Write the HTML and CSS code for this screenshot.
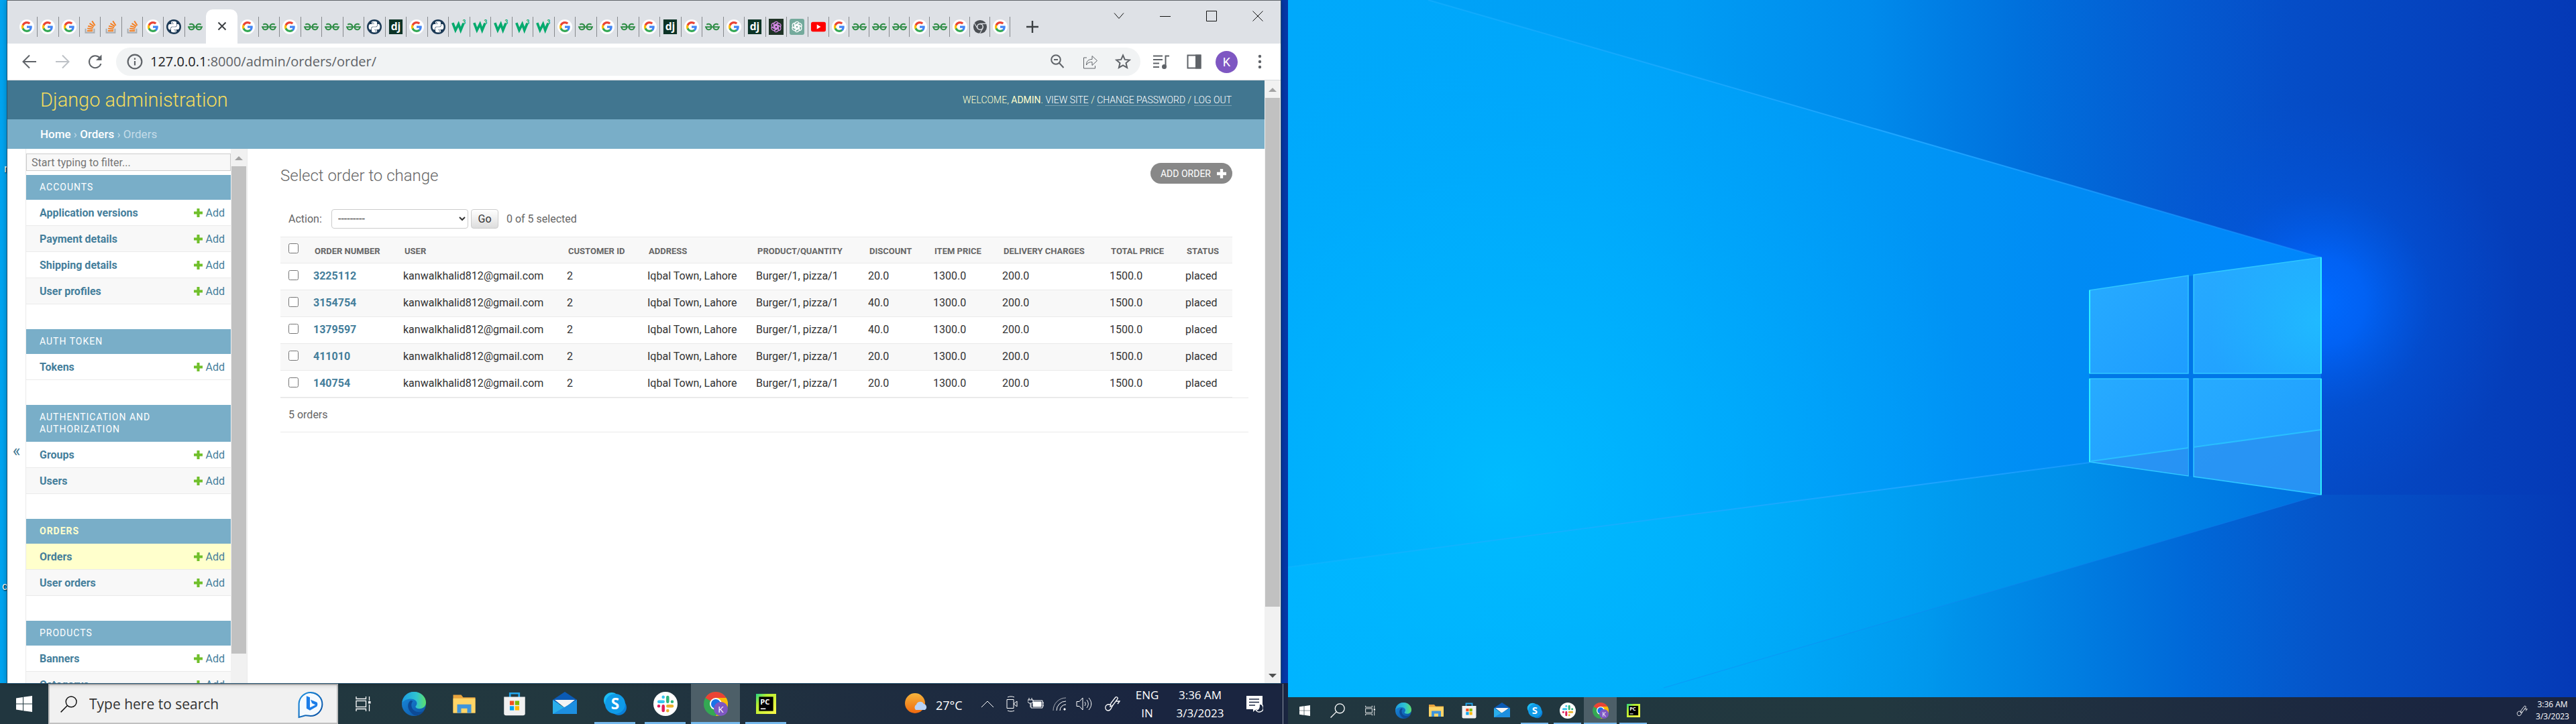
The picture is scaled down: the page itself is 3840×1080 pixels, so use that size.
FILE: index.html
```html
<!DOCTYPE html>
<html lang="en">
<head>
<meta charset="utf-8">
<title>Select order to change | Django site admin</title>
<link rel="stylesheet" href="styles.css">
</head>
<body>
<svg class="defs" aria-hidden="true">
  <defs>
    <linearGradient id="edge-a" x1="0" y1="0" x2="1" y2="0"><stop offset="0" stop-color="#1b9de2"/><stop offset=".6" stop-color="#2fc3d0"/><stop offset="1" stop-color="#5ddf6a"/></linearGradient>
    <linearGradient id="edge-b" x1="0" y1="0" x2="1" y2="1"><stop offset="0" stop-color="#1a8ee0"/><stop offset="1" stop-color="#0b4fa0"/></linearGradient>
    <linearGradient id="sun" x1="0" y1="0" x2="0" y2="1"><stop offset="0" stop-color="#f6b53c"/><stop offset="1" stop-color="#f0690e"/></linearGradient>
    <linearGradient id="pc" x1="0" y1="0" x2="1" y2="1"><stop offset="0" stop-color="#21d789"/><stop offset=".3" stop-color="#b6ee30"/><stop offset="1" stop-color="#fcf84a"/></linearGradient>
  </defs>
  <symbol id="i-google" viewBox="0 0 24 24"><circle cx="12" cy="12" r="12" fill="#fff"/><g transform="translate(2.4 2.4) scale(.8)"><path fill="#4285f4" d="M22.56 12.25c0-.78-.07-1.53-.2-2.25H12v4.26h5.92c-.26 1.37-1.04 2.53-2.21 3.31v2.77h3.57c2.08-1.92 3.28-4.74 3.28-8.09z"/><path fill="#34a853" d="M12 23c2.97 0 5.46-.98 7.28-2.66l-3.57-2.77c-.98.66-2.23 1.06-3.71 1.06-2.86 0-5.29-1.93-6.16-4.53H2.18v2.84C3.99 20.53 7.7 23 12 23z"/><path fill="#fbbc05" d="M5.84 14.09c-.22-.66-.35-1.36-.35-2.09s.13-1.43.35-2.09V7.07H2.18C1.43 8.55 1 10.22 1 12s.43 3.45 1.18 4.93l3.66-2.84z"/><path fill="#ea4335" d="M12 5.38c1.62 0 3.06.56 4.21 1.64l3.15-3.15C17.45 2.09 14.97 1 12 1 7.7 1 3.99 3.47 2.18 7.07l3.66 2.84c.87-2.6 3.3-4.53 6.16-4.53z"/></g></symbol>
  <symbol id="i-stack" viewBox="0 0 24 24"><path d="M5 15v6.500h14V15" fill="none" stroke="#a9adb1" stroke-width="2.200"/><path d="M7.500 18.500h9M7.800 14.800l8.900.9M9 10.600l8.500 2.600M11.500 6.400l7.200 5M15.500 2.600l4.800 7.200" stroke="#f48024" stroke-width="2.200"/></symbol>
  <symbol id="i-python" viewBox="0 0 24 24"><circle cx="12" cy="12" r="12" fill="#1c3a56"/><path transform="translate(2.900 2.900) scale(.76)" fill="#fff" d="M14.250.18l.9.2.73.26.59.3.45.32.34.34.25.34.16.33.1.3.04.26.02.2-.01.13V8.500l-.05.63-.13.55-.21.46-.26.38-.3.31-.33.25-.35.19-.35.14-.33.1-.3.07-.26.04-.21.02H8.770l-.69.05-.59.14-.5.22-.41.27-.33.32-.27.35-.2.36-.15.37-.1.35-.07.32-.04.27-.02.21v3.060H3.170l-.21-.03-.28-.07-.32-.12-.35-.18-.36-.26-.36-.36-.35-.46-.32-.59-.28-.73-.21-.88-.14-1.050-.05-1.230.06-1.220.16-1.040.24-.87.32-.71.36-.57.4-.44.42-.33.42-.24.4-.16.36-.1.32-.05.24-.01h.16l.06.01h8.160v-.83H6.180l-.01-2.750-.02-.37.05-.34.11-.31.17-.28.25-.26.31-.23.38-.2.44-.18.51-.15.58-.12.64-.1.71-.06.77-.04.84-.02 1.270.05zm-6.300 1.980l-.23.33-.08.41.08.41.23.34.33.22.41.09.41-.09.33-.22.23-.34.08-.41-.08-.41-.23-.33-.33-.22-.41-.09-.41.09zm13.090 3.950l.28.06.32.12.35.18.36.27.36.35.35.47.32.59.28.73.21.88.14 1.040.05 1.230-.06 1.230-.16 1.040-.24.86-.32.71-.36.57-.4.45-.42.33-.42.24-.4.16-.36.09-.32.05-.24.02-.16-.01h-8.220v.82h5.840l.01 2.760.02.36-.05.34-.11.31-.17.29-.25.25-.31.24-.38.2-.44.17-.51.15-.58.13-.64.09-.71.07-.77.04-.84.01-1.270-.04-1.070-.14-.9-.2-.73-.25-.59-.3-.45-.33-.34-.34-.25-.34-.16-.33-.1-.3-.04-.25-.02-.2.01-.13v-5.340l.05-.64.13-.54.21-.46.26-.38.3-.32.33-.24.35-.2.35-.14.33-.1.3-.06.26-.04.21-.02.13-.01h5.840l.69-.05.59-.14.5-.21.41-.28.33-.32.27-.35.2-.36.15-.36.1-.35.07-.32.04-.28.02-.21V6.070h2.090l.14.01zm-6.470 14.250l-.23.33-.08.41.08.41.23.33.33.23.41.08.41-.08.33-.23.23-.33.08-.41-.08-.41-.23-.33-.33-.23-.41-.08-.41.08z"/></symbol>
  <symbol id="i-geeks" viewBox="0 0 24 24"><g fill="none" stroke="#2f8d46" stroke-width="2.200"><path d="M2.500 8.500C5 6.500 10 7 10.300 12c0 6-8.300 6-8.300 1M0 12.300h24M21.500 8.500C19 6.500 14 7 13.700 12c0 6 8.300 6 8.300 1"/></g></symbol>
  <symbol id="i-django" viewBox="0 0 24 24"><rect x="1" width="22" height="24" fill="#0c3326"/><text x="12" y="17" font-family="Open Sans, sans-serif" font-size="17" font-weight="700" fill="#fff" text-anchor="middle">dj</text></symbol>
  <symbol id="i-w3" viewBox="0 0 24 24"><path d="M2 5.500l4.500 12 5-10 3.500 10 4.500-11" fill="none" stroke="#04aa6d" stroke-width="4"/><text x="18" y="8" font-family="Roboto, sans-serif" font-size="9" font-weight="700" fill="#04aa6d">3</text></symbol>
  <symbol id="i-knot" viewBox="0 0 24 24"><g fill="none" stroke="currentColor" stroke-width="1.300"><path id="knot" d="M8.500 14V7.500a3.700 3.700 0 0 1 6.800-2L10 8.600v6.200"/><use href="#knot" transform="rotate(60 12 12)"/><use href="#knot" transform="rotate(120 12 12)"/><use href="#knot" transform="rotate(180 12 12)"/><use href="#knot" transform="rotate(240 12 12)"/><use href="#knot" transform="rotate(300 12 12)"/></g></symbol>
  <symbol id="i-youtube" viewBox="0 0 24 24"><rect y="4" width="24" height="16" rx="3" fill="#f00"/><path d="M9.500 8.200v7.600l6.300-3.800z" fill="#fff"/></symbol>
  <symbol id="i-chrome-gray" viewBox="0 0 24 24"><circle cx="12" cy="12" r="11" fill="#4b4f54"/><path d="M12 7h10M7.700 14.500l-5-8.600M16.300 14.500l-5 8.600" stroke="#dee1e6" stroke-width="1.200"/><circle cx="12" cy="12" r="5.500" fill="#dee1e6"/><circle cx="12" cy="12" r="3.800" fill="#4b4f54"/></symbol>
  <symbol id="i-plus" viewBox="0 0 13 13"><path d="M4.500 0h4v4.500H13v4H8.500V13h-4V8.500H0v-4h4.500z" fill="currentColor"/></symbol>
  <symbol id="i-start" viewBox="0 0 24 24"><path fill="#fff" d="M0 3.400L10 2v9.500H0zM11 1.800L24 0v11.500H11zM0 12.500h10V22L0 20.600zM11 12.500h13V24l-13-1.800z"/></symbol>
  <symbol id="i-search" viewBox="0 0 24 24"><g fill="none" stroke="currentColor" stroke-width="1.400"><circle cx="15.500" cy="8.500" r="7.600"/><path d="M10 14L.6 23.400"/></g></symbol>
  <symbol id="i-taskview" viewBox="0 0 24 24"><g fill="none" stroke="#fff" stroke-width="1.300"><rect x="1" y="7.500" width="14.500" height="9"/><path d="M1 1v3.500h14.500V1M1 23v-3.500h14.500V23M20.500 1v6M20.500 13v10"/></g><rect x="19" y="8" width="3.500" height="3.500" fill="#fff"/></symbol>
  <symbol id="i-edge" viewBox="0 0 24 24"><circle cx="12" cy="12" r="12" fill="url(#edge-b)"/><path d="M.2 11C1 4.300 6 0 12 0c7 0 12 5 12 10.500 0 4-3 6.300-6.400 6.300-2.600 0-4-1-4-2 0-.8 1.400-1.300 1.400-3.300 0-2.500-2.600-4.500-6-4.500-4 0-7.500 1.800-8.800 4z" fill="url(#edge-a)"/><path d="M9 8.500c-4 2.500-4.500 9.500 3 14.500 4 1.500 8-1 10-4-6 3-12.500 0-12.500-6 0-1.700.8-3 1.500-3.700z" fill="#0d4a96"/></symbol>
  <symbol id="i-folder" viewBox="0 0 24 24"><path d="M1 3h8l2 2.500h12V21H1z" fill="#e8a33d"/><path d="M1 6.500h22V21H1z" fill="#ffd567"/><path d="M5 21v-8.500h14V21h-4v-4.500H9V21z" fill="#3f95dc"/></symbol>
  <symbol id="i-store" viewBox="0 0 24 24"><path d="M7.500 6V1.500h9V6" fill="none" stroke="#21a6ee" stroke-width="1.800"/><path d="M1.500 5h21v16.500a2 2 0 0 1-2 2h-17a2 2 0 0 1-2-2z" fill="#f1f1f1"/><path fill="#f25022" d="M7.300 9h4.200v4.200H7.300z"/><path fill="#7fba00" d="M12.500 9h4.200v4.200h-4.200z"/><path fill="#00a4ef" d="M7.300 14.200h4.200v4.200H7.300z"/><path fill="#ffb900" d="M12.500 14.200h4.200v4.200h-4.200z"/></symbol>
  <symbol id="i-mail" viewBox="0 0 24 24"><path d="M0 8L12 0l12 8v4H0z" fill="#0a5ab5"/><path d="M2 8h20l-10 8z" fill="#f4f4f4"/><path d="M0 8l12 8 12-8v14H0z" fill="#2aaeea"/><path d="M24 8L0 22h24z" fill="#1d8fe0"/><path d="M2.500 8h19l-9.500 7z" fill="#f4f4f4"/></symbol>
  <symbol id="i-skype" viewBox="0 0 24 24"><circle cx="8.500" cy="8.500" r="7.800" fill="#1dbdf5"/><circle cx="15.500" cy="15.500" r="7.800" fill="#0a7fd8"/><circle cx="12" cy="12" r="10" fill="#0f9be8"/><text x="12" y="17" font-family="Open Sans, sans-serif" font-size="15" font-weight="700" fill="#fff" text-anchor="middle">S</text></symbol>
  <symbol id="i-slack" viewBox="0 0 24 24"><circle cx="12" cy="12" r="12" fill="#fff"/><g fill="none" stroke-width="3" stroke-linecap="round"><path d="M9.800 5.200v.1M5.500 9.800h4.300" stroke="#36c5f0"/><path d="M14.200 5.300v4.500M18.600 9.800h.1" stroke="#2eb67d"/><path d="M14.200 14.200h4.500M14.200 18.700v.1" stroke="#ecb22e"/><path d="M9.800 14.200v4.500M5.300 14.200h.1" stroke="#e01e5a"/></g></symbol>
  <symbol id="i-chrome" viewBox="0 0 24 24"><circle cx="12" cy="12" r="12" fill="#34a853"/><path d="M12 12L1.600 6A12 12 0 0 1 22.400 6z" fill="#ea4335"/><path d="M12 6h10.400A12 12 0 0 1 12 24l5.200-9z" fill="#fbbc05"/><circle cx="12" cy="12" r="6" fill="#fff"/><circle cx="12" cy="12" r="4.700" fill="#1a73e8"/><circle cx="17" cy="17" r="7" fill="#7e57c2"/><text x="17" y="20.500" font-family="Open Sans, sans-serif" font-size="9" fill="#fff" text-anchor="middle">K</text></symbol>
  <symbol id="i-pycharm" viewBox="0 0 24 24"><path fill="url(#pc)" d="M0 0h24v24H0z"/><path d="M3.500 3.500h17v17h-17z"/><text x="5" y="12.500" font-family="Open Sans, sans-serif" font-size="9" font-weight="700" fill="#fff">PC</text><path d="M5.500 17.200h6v1.300h-6z" fill="#fff"/></symbol>
  <symbol id="i-pen" viewBox="0 0 24 24"><g fill="none" stroke="#fff" stroke-width="1.300"><path d="M9 16l1-5 7-9c1-1 4 0 3 2.500L13 14zM17 8h6l-3 4M9 13c-9-2-9 9-3 9 4 0 4-4 7-8"/></g></symbol>
</svg>

<main class="screens">
<section class="monitor" aria-label="Display 1">
  <div class="desktop">
    <span class="label label-a" aria-hidden="true">r</span>
    <span class="label label-b" aria-hidden="true">c</span>
    <div class="browser">
      <div class="tabstrip">
        <div class="tabs tabs-a">
          <button class="tab" aria-label="Google"><svg><use href="#i-google"/></svg></button>
          <button class="tab" aria-label="Google"><svg><use href="#i-google"/></svg></button>
          <button class="tab" aria-label="Google"><svg><use href="#i-google"/></svg></button>
          <button class="tab" aria-label="Stack Overflow"><svg><use href="#i-stack"/></svg></button>
          <button class="tab" aria-label="Stack Overflow"><svg><use href="#i-stack"/></svg></button>
          <button class="tab" aria-label="Stack Overflow"><svg><use href="#i-stack"/></svg></button>
          <button class="tab" aria-label="Google"><svg><use href="#i-google"/></svg></button>
          <button class="tab" aria-label="Python"><svg><use href="#i-python"/></svg></button>
          <button class="tab last" aria-label="GeeksforGeeks"><svg><use href="#i-geeks"/></svg></button>
        </div>
        <button class="tab-active" aria-label="Close tab"><svg viewBox="0 0 14 14"><path d="M1.500 1.500l11 11M12.500 1.500l-11 11" stroke="#3c4043" stroke-width="2"/></svg></button>
        <div class="tabs tabs-b">
          <button class="tab" aria-label="Google"><svg><use href="#i-google"/></svg></button>
          <button class="tab" aria-label="GeeksforGeeks"><svg><use href="#i-geeks"/></svg></button>
          <button class="tab" aria-label="Google"><svg><use href="#i-google"/></svg></button>
          <button class="tab" aria-label="GeeksforGeeks"><svg><use href="#i-geeks"/></svg></button>
          <button class="tab" aria-label="GeeksforGeeks"><svg><use href="#i-geeks"/></svg></button>
          <button class="tab" aria-label="GeeksforGeeks"><svg><use href="#i-geeks"/></svg></button>
          <button class="tab" aria-label="Python"><svg><use href="#i-python"/></svg></button>
          <button class="tab" aria-label="Django"><svg><use href="#i-django"/></svg></button>
          <button class="tab" aria-label="Google"><svg><use href="#i-google"/></svg></button>
          <button class="tab" aria-label="Python"><svg><use href="#i-python"/></svg></button>
          <button class="tab" aria-label="W3Schools"><svg><use href="#i-w3"/></svg></button>
          <button class="tab" aria-label="W3Schools"><svg><use href="#i-w3"/></svg></button>
          <button class="tab" aria-label="W3Schools"><svg><use href="#i-w3"/></svg></button>
          <button class="tab" aria-label="W3Schools"><svg><use href="#i-w3"/></svg></button>
          <button class="tab" aria-label="W3Schools"><svg><use href="#i-w3"/></svg></button>
          <button class="tab" aria-label="Google"><svg><use href="#i-google"/></svg></button>
          <button class="tab" aria-label="GeeksforGeeks"><svg><use href="#i-geeks"/></svg></button>
          <button class="tab" aria-label="Google"><svg><use href="#i-google"/></svg></button>
          <button class="tab" aria-label="GeeksforGeeks"><svg><use href="#i-geeks"/></svg></button>
          <button class="tab" aria-label="Google"><svg><use href="#i-google"/></svg></button>
          <button class="tab" aria-label="Django"><svg><use href="#i-django"/></svg></button>
          <button class="tab" aria-label="Google"><svg><use href="#i-google"/></svg></button>
          <button class="tab" aria-label="GeeksforGeeks"><svg><use href="#i-geeks"/></svg></button>
          <button class="tab" aria-label="Google"><svg><use href="#i-google"/></svg></button>
          <button class="tab" aria-label="Django"><svg><use href="#i-django"/></svg></button>
          <button class="tab" aria-label="OpenAI"><svg class="knot-dark"><use href="#i-knot"/></svg></button>
          <button class="tab" aria-label="ChatGPT"><svg class="knot-green"><use href="#i-knot"/></svg></button>
          <button class="tab" aria-label="YouTube"><svg><use href="#i-youtube"/></svg></button>
        </div>
        <div class="tabs tabs-c">
          <button class="tab" aria-label="Google"><svg><use href="#i-google"/></svg></button>
          <button class="tab" aria-label="GeeksforGeeks"><svg><use href="#i-geeks"/></svg></button>
          <button class="tab" aria-label="GeeksforGeeks"><svg><use href="#i-geeks"/></svg></button>
          <button class="tab" aria-label="GeeksforGeeks"><svg><use href="#i-geeks"/></svg></button>
          <button class="tab" aria-label="Google"><svg><use href="#i-google"/></svg></button>
          <button class="tab" aria-label="GeeksforGeeks"><svg><use href="#i-geeks"/></svg></button>
          <button class="tab" aria-label="Google"><svg><use href="#i-google"/></svg></button>
          <button class="tab" aria-label="Chrome"><svg><use href="#i-chrome-gray"/></svg></button>
          <button class="tab" aria-label="Google"><svg><use href="#i-google"/></svg></button>
        </div>
        <button class="new-tab" aria-label="New tab"><svg viewBox="0 0 18 18"><path d="M9 0v18M0 9h18" stroke="#3c4043" stroke-width="2.400"/></svg></button>
        <div class="win-controls">
          <button aria-label="Search tabs"><svg viewBox="0 0 16 16"><path d="M1 3.500l7 8 7-8"/></svg></button>
          <button aria-label="Minimize"><svg viewBox="0 0 16 16"><path d="M0 8.500h16"/></svg></button>
          <button aria-label="Maximize"><svg viewBox="0 0 16 16"><path d="M.5.500h15v15h-15z"/></svg></button>
          <button aria-label="Close"><svg viewBox="0 0 16 16"><path d="M.5.500l15 15M15.500.500l-15 15"/></svg></button>
        </div>
      </div>

      <div class="toolbar">
        <button class="tool" aria-label="Back"><svg viewBox="0 0 24 24"><path d="M22 12H3.500M12 2.500L2.500 12l9.500 9.500"/></svg></button>
        <button class="tool off" aria-label="Forward"><svg viewBox="0 0 24 24"><path d="M2 12h18.500M12 2.500l9.500 9.500-9.500 9.500"/></svg></button>
        <button class="tool" aria-label="Reload"><svg viewBox="0 0 24 24"><path d="M18.500 6A9 9 0 1 0 20.500 15"/><path d="M21.500 1.500v8.500H13z" class="solid bare"/></svg></button>
        <div class="omnibox">
          <svg class="info" viewBox="0 0 22 22"><circle cx="11" cy="11" r="9.500"/><path d="M11 10v6M11 6v2.200"/></svg>
          <div class="url" role="textbox" aria-label="Address"><span class="host">127.0.0.1</span>:8000/admin/orders/order/</div>
          <button class="tool" aria-label="Zoom"><svg viewBox="0 0 24 24"><circle cx="10" cy="9" r="6.800"/><path d="M15 14l6.500 7M7 9h6"/></svg></button>
          <button class="tool" aria-label="Share"><svg class="thin" viewBox="0 0 24 24"><path d="M7 6H2.500v16h17v-4M6.500 17c0-6 3-8.500 8.500-8.500V3.500l7.500 7-7.500 7v-5c-4 0-6.500 1-8.500 4.500z"/></svg></button>
          <button class="tool" aria-label="Bookmark"><svg viewBox="0 0 24 24"><path d="M12 2.500l2.800 6.400 7 .6-5.300 4.600 1.600 6.800-6.100-3.600-6.100 3.600 1.600-6.800-5.300-4.600 7-.6z"/></svg></button>
        </div>
        <button class="tool" aria-label="Media"><svg viewBox="0 0 24 24"><path d="M0 3.500h14M0 9h14M0 14.500h9M0 20h9M18.500 19V3.500H24"/><circle cx="16.500" cy="19.500" r="2.500" class="solid"/></svg></button>
        <button class="tool" aria-label="Side panel"><svg viewBox="0 0 24 24"><path d="M2.500 2.500h19v19h-19z"/><path d="M15 2.500h6.500v19H15z" class="solid"/></svg></button>
        <button class="tool" aria-label="Profile"><span class="avatar">K</span></button>
        <button class="tool" aria-label="Menu"><svg viewBox="0 0 24 24"><g class="solid"><circle cx="12" cy="4" r="1.200"/><circle cx="12" cy="12" r="1.200"/><circle cx="12" cy="20" r="1.200"/></g></svg></button>
      </div>

      <div class="page">
        <div class="site">
          <header class="site-header">
            <a class="brand" href="#">Django administration</a>
            <div class="user-tools">Welcome, <strong>admin</strong>. <a href="#">View site</a> / <a href="#">Change password</a> / <a href="#">Log out</a></div>
          </header>
          <nav class="breadcrumbs" aria-label="Breadcrumbs"><a href="#">Home</a> › <a href="#">Orders</a> › Orders</nav>
          <div class="columns">
            <button class="nav-toggle" aria-label="Toggle navigation">«</button>
            <nav class="sidebar" aria-label="Applications">
              <div class="apps">
                <input class="filter" type="search" placeholder="Start typing to filter..." aria-label="Filter navigation items">
                <section class="module"><h2>Accounts</h2><ul>
                  <li><a class="model" href="#">Application versions</a><a class="add" href="#"><svg><use href="#i-plus"/></svg>Add</a></li>
                  <li><a class="model" href="#">Payment details</a><a class="add" href="#"><svg><use href="#i-plus"/></svg>Add</a></li>
                  <li><a class="model" href="#">Shipping details</a><a class="add" href="#"><svg><use href="#i-plus"/></svg>Add</a></li>
                  <li><a class="model" href="#">User profiles</a><a class="add" href="#"><svg><use href="#i-plus"/></svg>Add</a></li>
                </ul></section>
                <section class="module"><h2>Auth Token</h2><ul>
                  <li><a class="model" href="#">Tokens</a><a class="add" href="#"><svg><use href="#i-plus"/></svg>Add</a></li>
                </ul></section>
                <section class="module"><h2>Authentication and Authorization</h2><ul>
                  <li><a class="model" href="#">Groups</a><a class="add" href="#"><svg><use href="#i-plus"/></svg>Add</a></li>
                  <li><a class="model" href="#">Users</a><a class="add" href="#"><svg><use href="#i-plus"/></svg>Add</a></li>
                </ul></section>
                <section class="module current"><h2>Orders</h2><ul>
                  <li class="current-model"><a class="model" href="#">Orders</a><a class="add" href="#"><svg><use href="#i-plus"/></svg>Add</a></li>
                  <li><a class="model" href="#">User orders</a><a class="add" href="#"><svg><use href="#i-plus"/></svg>Add</a></li>
                </ul></section>
                <section class="module"><h2>Products</h2><ul>
                  <li><a class="model" href="#">Banners</a><a class="add" href="#"><svg><use href="#i-plus"/></svg>Add</a></li>
                  <li><a class="model" href="#">Categorys</a><a class="add" href="#"><svg><use href="#i-plus"/></svg>Add</a></li>
                </ul></section>
              </div>
              <div class="scrollbar" aria-hidden="true"><i class="up"></i><div class="thumb side-thumb"></div></div>
            </nav>
            <div class="content">
              <div class="title-row">
                <h1>Select order to change</h1>
                <a class="add-order" href="#">Add order<svg><use href="#i-plus"/></svg></a>
              </div>
              <form class="changelist">
                <div class="actions">
                  <label for="action">Action:</label>
                  <select id="action"><option>---------</option><option>Delete selected orders</option></select>
                  <button class="go" type="button">Go</button>
                  <span>0 of 5 selected</span>
                </div>
                <table>
                  <colgroup><col class="c0"><col class="c1"><col class="c2"><col class="c3"><col class="c4"><col class="c5"><col class="c6"><col class="c7"><col class="c8"><col class="c9"><col class="c10"></colgroup>
                  <thead><tr><th><input type="checkbox" aria-label="Select all"></th><th>Order number</th><th>User</th><th>Customer id</th><th>Address</th><th>Product/quantity</th><th>Discount</th><th>Item price</th><th>Delivery charges</th><th>Total price</th><th>Status</th></tr></thead>
                  <tbody>
                    <tr><td><input type="checkbox" aria-label="Select 3225112"></td><td><a href="#">3225112</a></td><td>kanwalkhalid812@gmail.com</td><td>2</td><td>Iqbal Town, Lahore</td><td>Burger/1, pizza/1</td><td>20.0</td><td>1300.0</td><td>200.0</td><td>1500.0</td><td>placed</td></tr>
                    <tr><td><input type="checkbox" aria-label="Select 3154754"></td><td><a href="#">3154754</a></td><td>kanwalkhalid812@gmail.com</td><td>2</td><td>Iqbal Town, Lahore</td><td>Burger/1, pizza/1</td><td>40.0</td><td>1300.0</td><td>200.0</td><td>1500.0</td><td>placed</td></tr>
                    <tr><td><input type="checkbox" aria-label="Select 1379597"></td><td><a href="#">1379597</a></td><td>kanwalkhalid812@gmail.com</td><td>2</td><td>Iqbal Town, Lahore</td><td>Burger/1, pizza/1</td><td>40.0</td><td>1300.0</td><td>200.0</td><td>1500.0</td><td>placed</td></tr>
                    <tr><td><input type="checkbox" aria-label="Select 411010"></td><td><a href="#">411010</a></td><td>kanwalkhalid812@gmail.com</td><td>2</td><td>Iqbal Town, Lahore</td><td>Burger/1, pizza/1</td><td>20.0</td><td>1300.0</td><td>200.0</td><td>1500.0</td><td>placed</td></tr>
                    <tr><td><input type="checkbox" aria-label="Select 140754"></td><td><a href="#">140754</a></td><td>kanwalkhalid812@gmail.com</td><td>2</td><td>Iqbal Town, Lahore</td><td>Burger/1, pizza/1</td><td>20.0</td><td>1300.0</td><td>200.0</td><td>1500.0</td><td>placed</td></tr>
                  </tbody>
                </table>
              </form>
              <p class="paginator">5 orders</p>
            </div>
          </div>
        </div>
        <div class="scrollbar page-scroll" aria-hidden="true"><i class="up"></i><div class="thumb page-thumb"></div><i class="down"></i></div>
      </div>
    </div>
  </div>

  <footer class="taskbar">
    <button class="start" aria-label="Start"><svg><use href="#i-start"/></svg></button>
    <label class="search"><svg><use href="#i-search"/></svg><input type="text" placeholder="Type here to search" aria-label="Type here to search">
      <svg class="bing" viewBox="0 0 40 42"><path d="M3 40V20a17 17 0 1 1 17 18c-4 0-6-1-8.500-.500z" fill="#f4faff" stroke="url(#edge-b)" stroke-width="2"/><path d="M14 9l5 2v15l8-4-5-2.500-2-5 9 3.500c2 2 1 6-1 7l-9 5-5-3z" fill="#1b7de8"/></svg>
    </label>
    <div class="apps-row">
      <button aria-label="Task view"><svg class="small"><use href="#i-taskview"/></svg></button>
      <button aria-label="Edge"><svg><use href="#i-edge"/></svg></button>
      <button aria-label="File Explorer"><svg><use href="#i-folder"/></svg></button>
      <button aria-label="Store"><svg><use href="#i-store"/></svg></button>
      <button aria-label="Mail"><svg><use href="#i-mail"/></svg></button>
      <button class="running" aria-label="Skype"><svg><use href="#i-skype"/></svg></button>
      <button class="running" aria-label="Slack"><svg><use href="#i-slack"/></svg></button>
      <button class="running focused" aria-label="Chrome"><svg><use href="#i-chrome"/></svg></button>
      <button class="running" aria-label="PyCharm"><svg class="boxy"><use href="#i-pycharm"/></svg></button>
    </div>
    <div class="tray">
      <svg class="weather" viewBox="0 0 34 32"><circle cx="15" cy="15" r="15" fill="url(#sun)"/><path d="M16 25a5 5 0 0 1 1-8 6 6 0 0 1 11-1 5 5 0 0 1 2 9z" fill="#b8d2f7"/></svg>
      <span class="temp">27°C</span>
      <div class="tray-icons">
        <svg viewBox="0 0 24 24"><path d="M3 17l9-9 9 9"/></svg>
        <svg viewBox="0 0 24 24"><path d="M5 5.500h10v13H5zM15 12l5-4v8zM6 2c3-1.500 7-1.500 10 0M6 22c3 1.500 7 1.500 10 0"/></svg>
        <svg viewBox="0 0 24 24"><path d="M7 7h15v11H5v-6M22 10h2v5h-2M2 3v3M6 3v3M0 6h8v3l-2 2H2L0 9zM4 11v6"/><path d="M8 9h12v7H8z" fill="#fff"/></svg>
        <svg viewBox="0 0 24 24"><path d="M2 22A19 19 0 0 1 21 3" opacity=".6"/><path d="M7 22A14 14 0 0 1 21 8M12 22a9 9 0 0 1 9-9"/><circle cx="19" cy="20" r="1.200" fill="#fff"/></svg>
        <svg viewBox="0 0 24 24"><path d="M1 8.500h4l5-5.500v18l-5-5.500H1zM13 9c1.500 2 1.500 4 0 6M16 6c3 4 3 8 0 12M19 3c5 6 5 12 0 18"/></svg>
      </div>
      <svg class="pen"><use href="#i-pen"/></svg>
      <div class="two-line lang"><span>ENG</span><span>IN</span></div>
      <div class="two-line clock"><span>3:36 AM</span><span>3/3/2023</span></div>
      <button class="notify" aria-label="Notifications"><svg viewBox="0 0 26 26"><path d="M1 1h24v20H15l-4 4v-4H1z" fill="#fff"/><path d="M5 6h15M5 10.500h15M5 15h9" stroke="#1b2740" stroke-width="1.500"/><path d="M20 13a6 6 0 1 1-5 9c4 1 6-4 5-9z" fill="#1b2740" stroke="#fff" stroke-width="1.300"/></svg></button>
      <span class="peek"></span>
    </div>
  </footer>
</section>

<section class="monitor" aria-label="Display 2">
  <div class="wallpaper">
    <svg viewBox="0 0 1920 1040" preserveAspectRatio="none" aria-hidden="true">
      <defs>
        <linearGradient id="w-base" gradientUnits="userSpaceOnUse" x1="0" y1="0" x2="1920" y2="0"><stop offset="0" stop-color="#00a6f9"/><stop offset=".3" stop-color="#009df4"/><stop offset=".45" stop-color="#008bec"/><stop offset=".57" stop-color="#0070dc"/><stop offset=".68" stop-color="#045cd2"/><stop offset=".78" stop-color="#054dc7"/><stop offset="1" stop-color="#0539b6"/></linearGradient>
        <linearGradient id="w-low" gradientUnits="userSpaceOnUse" x1="0" y1="0" x2="1920" y2="0"><stop offset="0" stop-color="#00b4fe"/><stop offset=".35" stop-color="#00a8f6"/><stop offset=".5" stop-color="#0096ec"/><stop offset=".6" stop-color="#0080e2"/><stop offset=".7" stop-color="#0068d8"/><stop offset=".8" stop-color="#0555ca"/><stop offset="1" stop-color="#0539b6"/></linearGradient>
        <linearGradient id="w-beam" gradientUnits="userSpaceOnUse" x1="0" y1="0" x2="1540" y2="0"><stop offset="0" stop-color="#00a9fb"/><stop offset=".3" stop-color="#00a6fa"/><stop offset=".55" stop-color="#0099f6"/><stop offset=".76" stop-color="#008bf4"/><stop offset="1" stop-color="#0086fc"/></linearGradient>
        <linearGradient id="w-floor" gradientUnits="userSpaceOnUse" x1="0" y1="0" x2="1540" y2="0"><stop offset="0" stop-color="#00b6ff"/><stop offset=".4" stop-color="#00abf8"/><stop offset=".75" stop-color="#0091ea"/><stop offset="1" stop-color="#006fdf"/></linearGradient>
        <radialGradient id="w-cyan" gradientUnits="userSpaceOnUse" cx="320" cy="720" r="720"><stop offset="0" stop-color="#00bdff" stop-opacity=".9"/><stop offset=".5" stop-color="#00b4ff" stop-opacity=".5"/><stop offset="1" stop-color="#00a8ff" stop-opacity="0"/></radialGradient>
        <radialGradient id="w-glow" gradientUnits="userSpaceOnUse" cx="1540" cy="450" r="300"><stop offset="0" stop-color="#006aff"/><stop offset=".22" stop-color="#0066fc" stop-opacity=".85"/><stop offset=".55" stop-color="#005cea" stop-opacity=".3"/><stop offset="1" stop-color="#0055e0" stop-opacity="0"/></radialGradient>
        <linearGradient id="w-line" gradientUnits="userSpaceOnUse" x1="0" y1="0" x2="1540" y2="0"><stop offset="0" stop-color="#20b4ff" stop-opacity=".3"/><stop offset=".6" stop-color="#1fa5ff"/><stop offset="1" stop-color="#1a90ff" stop-opacity=".5"/></linearGradient>
        <linearGradient id="w-pane" x1="0" y1="0" x2="1" y2="1"><stop offset="0" stop-color="#27abff"/><stop offset="1" stop-color="#1e9dff"/></linearGradient>
        <radialGradient id="w-shine" gradientUnits="userSpaceOnUse" cx="1540" cy="480" r="170"><stop offset="0" stop-color="#20c0ff" stop-opacity=".8"/><stop offset="1" stop-color="#20c0ff" stop-opacity="0"/></radialGradient>
      </defs>
      <path fill="url(#w-base)" d="M0 0h1920v1040H0z"/>
      <path fill="url(#w-low)" d="M0 738h1920v302H0z"/>
      <path fill="url(#w-glow)" d="M1200 100h720v740h-720z"/>
      <path fill="url(#w-beam)" d="M0 0h209l1331 384v354l-345-48L0 846z"/>
      <path fill="url(#w-floor)" d="M0 846l1195-156 345 48-980 288-50 14H0z"/>
      <path fill="url(#w-cyan)" d="M0 0h1920v1040H0z"/>
      <path fill="none" stroke="url(#w-line)" stroke-width="2" d="M209 0l1331 384M0 846l1195-156"/>
      <path fill="none" stroke="#1a7cf0" stroke-opacity=".4" d="M1540 738L560 1026"/>
      <path fill="#0072e4" d="M1195 433l345-49v354l-345-49z" opacity=".8"/>
      <g fill="url(#w-pane)" stroke="#30c8ff" stroke-width="1.500">
        <path d="M1195 433l147-22v146h-147z"/><path d="M1350 410l190-26v173h-190z"/>
        <path d="M1195 565h147v145l-147-21z"/><path d="M1350 565h190v173l-190-27z"/>
      </g>
      <path fill="url(#w-shine)" d="M1350 410l190-26v173h-190z"/>
      <path fill="#2b8ff0" fill-opacity=".75" d="M1197 688l145-20v41zM1351 667l188-26v95l-188-26z"/>
      <path fill="none" stroke="#29bfff" stroke-width="2" d="M1197 688l145-20M1350 667l190-26"/>
      <path fill="none" stroke="#2ff0ff" stroke-width="2" d="M1195 433v124M1195 565v124M1540 384v173M1540 565v173"/>
    </svg>
  </div>
  <footer class="taskbar compact">
    <div class="apps-row">
      <button aria-label="Start"><svg class="small"><use href="#i-start"/></svg></button>
      <button class="light" aria-label="Search"><svg><use href="#i-search"/></svg></button>
      <button aria-label="Task view"><svg class="small"><use href="#i-taskview"/></svg></button>
      <button aria-label="Edge"><svg><use href="#i-edge"/></svg></button>
      <button aria-label="File Explorer"><svg><use href="#i-folder"/></svg></button>
      <button aria-label="Store"><svg><use href="#i-store"/></svg></button>
      <button aria-label="Mail"><svg><use href="#i-mail"/></svg></button>
      <button class="running" aria-label="Skype"><svg><use href="#i-skype"/></svg></button>
      <button class="running" aria-label="Slack"><svg><use href="#i-slack"/></svg></button>
      <button class="running focused" aria-label="Chrome"><svg><use href="#i-chrome"/></svg></button>
      <button class="running" aria-label="PyCharm"><svg class="boxy"><use href="#i-pycharm"/></svg></button>
    </div>
    <div class="tray">
      <svg class="pen"><use href="#i-pen"/></svg>
      <div class="two-line clock"><span>3:36 AM</span><span>3/3/2023</span></div>
    </div>
  </footer>
</section>
</main>
</body>
</html>
```
FILE: styles.css
```css
* { box-sizing: border-box; }
body { margin: 0; background: #0539b6; font-family: Roboto, sans-serif; font-size: 16px; color: #333; }
button { border: 0; padding: 0; margin: 0; background: none; font: inherit; color: inherit; display: flex; align-items: center; justify-content: center; }
a { color: #447e9b; text-decoration: none; }
svg { display: block; flex: none; }
.defs { position: absolute; width: 0; height: 0; }

.screens { display: grid; grid-template-columns: 1fr 1fr; height: 100vh; overflow: hidden; }
.monitor { display: flex; flex-direction: column; min-width: 0; min-height: 0; }

/* Desktop behind the browser */
.desktop { position: relative; flex: 1; min-height: 0; display: flex; padding: 0 11px; background: linear-gradient(90deg, #00a4f0, #0538a8); }
.label { position: absolute; color: #fff; font-size: 16px; line-height: 16px; text-shadow: 1px 1px 2px #000; }
.label-a { left: 6px; top: 244px; }
.label-b { left: 3px; top: 867px; }
.browser { position: relative; flex: 1; min-width: 0; display: flex; flex-direction: column; background: #fff; border-top: 1px solid #5f6368; box-shadow: 0 0 0 1px #24506e, 0 0 9px rgba(0, 0, 0, .35); overflow: hidden; }

/* Tabs */
.tabstrip { display: flex; height: 64px; flex: none; background: #dee1e6; padding-left: 14px; }
.tabs { display: flex; padding-top: 24px; height: 54px; }
.tabs-a { flex: 0 0 282px; }
.tabs-b { flex: 0 0 882px; }
.tabs-c { flex: 0 0 270px; }
.tab { flex: 1; border-right: 1px solid #86898d; }
.tab.last { border-right-color: transparent; }
.tab svg { width: 22px; height: 24px; }
.knot-dark { background: #1f3326; color: #d58ae6; }
.knot-green { background: #74aa9c; color: #fff; border-radius: 3px; }
.tab-active { flex: 0 0 47px; height: 51px; margin-top: 13px; background: #fff; border-radius: 10px 10px 0 0; }
.tab-active svg { width: 14px; height: 14px; margin-bottom: 2px; }
.new-tab { width: 66px; height: 78px; }
.new-tab svg { width: 18px; height: 18px; }
.win-controls { display: flex; margin-left: auto; height: 45px; }
.win-controls button { width: 69px; }
.win-controls svg { width: 16px; height: 16px; fill: none; stroke: #111; }

/* Toolbar */
.toolbar { display: flex; align-items: center; height: 55px; flex: none; padding: 0 7px 0 8px; border-bottom: 1px solid #d5d8dc; }
.tool { width: 49px; height: 42px; }
.tool svg, .info { width: 24px; height: 24px; fill: none; stroke: #5f6368; stroke-width: 2px; }
.tool.off svg { stroke: #bdc1c6; }
.tool .thin { stroke-width: 1px; }
.solid { fill: #5f6368; }
.bare { stroke: none; }
.omnibox { flex: 1; display: flex; align-items: center; height: 42px; margin: 0 6px 0 7px; padding: 0 2px 0 16px; border-radius: 21px; background: #f1f3f4; }
.url { flex: 1; margin-left: 11px; font: 20px/28px "Open Sans", sans-serif; color: #5f6368; }
.host { color: #202124; }
.avatar { width: 33px; height: 33px; border-radius: 50%; background: #7e57c2; color: #fff; font-size: 18px; line-height: 33px; }

/* Django admin */
.page { flex: 1; min-height: 0; display: flex; }
.site { flex: 1; min-width: 0; display: flex; flex-direction: column; }
.site-header { display: flex; align-items: center; justify-content: space-between; flex: none; height: 58px; padding: 0 49px; background: #417690; color: #ffc; }
.brand { font-size: 29px; font-weight: 300; color: #f5dd5d; }
.user-tools { font-size: 14px; font-weight: 300; text-transform: uppercase; line-height: 16px; }
.user-tools a { color: #fff; border-bottom: 1px solid rgba(255, 255, 255, .3); }
.breadcrumbs { flex: none; height: 44px; padding: 0 49px; background: #79aec8; color: #c4dce8; font-size: 17px; line-height: 44px; }
.breadcrumbs a { color: #fff; font-weight: 500; }
.columns { flex: 1; min-height: 0; display: flex; align-items: stretch; overflow: hidden; }
.nav-toggle { flex: none; width: 27px; padding-top: 104px; color: #417893; font-size: 25px; }
.sidebar { flex: none; width: 331px; display: flex; border-left: 1px solid #eaeaea; border-right: 1px solid #eaeaea; overflow: hidden; }
.apps { flex: 1; padding-top: 7px; }
.filter { display: block; width: 100%; height: 26px; margin: 0 0 6px; padding: 0 7px; border: 1px solid #ccc; border-radius: 0; background: #f8f8f8; font: 16px Roboto, sans-serif; }
.filter::placeholder { color: #757575; }
.module { margin-bottom: 37px; }
.module h2 { margin: 0; padding: 9px 70px 10px 20px; background: #79aec8; color: #fff; font-size: 14px; font-weight: 400; line-height: 18px; letter-spacing: 1px; text-transform: uppercase; }
.module.current h2 { color: #ffc; font-weight: 700; }
.module ul { margin: 0; padding: 0; list-style: none; }
.module li { display: flex; align-items: center; justify-content: space-between; height: 39px; padding: 0 9px 0 20px; border-bottom: 1px solid #eaeaea; }
.module li:nth-child(even) { background: #f8f8f8; }
.module .current-model { background: #ffc; }
.model { font-weight: 700; }
.add { display: flex; align-items: center; gap: 5px; }
.add svg { width: 13px; height: 13px; color: #70bf2b; }

.scrollbar { flex: none; width: 24px; display: flex; flex-direction: column; align-items: center; padding: 9px 1px; background: #f1f1f1; }
.up { border: 6px solid transparent; border-top: 0; border-bottom-color: #a3a3a3; margin: 2px 0 9px; }
.down { border: 6px solid transparent; border-bottom: 0; border-top-color: #505050; margin: auto 0 0; }
.thumb { width: 22px; background: #c1c1c1; }
.side-thumb { height: 727px; }
.page-thumb { height: 86%; }
.page-scroll { padding-bottom: 8px; }

.content { flex: 1; min-width: 0; padding: 21px 24px 0 49px; color: #666; }
.title-row { display: flex; justify-content: space-between; margin-right: 24px; height: 69px; }
h1 { margin: 0; padding-top: 3px; font-size: 24px; font-weight: 300; line-height: 32px; }
.add-order { display: flex; align-items: center; gap: 9px; height: 31px; padding: 0 9px 0 15px; border-radius: 16px; background: #888; color: #fff; font-size: 14px; text-transform: uppercase; }
.add-order svg { width: 14px; height: 14px; }
.changelist { margin-right: 24px; }
.actions { display: flex; align-items: center; height: 29px; margin-bottom: 12px; padding-left: 12px; }
.actions label { width: 64px; }
.actions select { width: 204px; height: 29px; padding: 0 5px; border: 1px solid #ccc; border-radius: 4px; background: #fff; font: 16px Roboto, sans-serif; color: #333; }
.go { width: 41px; height: 29px; margin: 0 12px 0 4px; border: 1px solid #ccc; border-radius: 4px; background: linear-gradient(#fff, #ddd); color: #333; }
table { width: 100%; table-layout: fixed; border-collapse: collapse; border-top: 1px solid #eaeaea; }
.c0 { width: 39px; } .c1 { width: 134px; } .c2 { width: 244px; } .c3 { width: 120px; } .c4 { width: 162px; } .c5 { width: 167px; }
.c6 { width: 97px; } .c7 { width: 103px; } .c8 { width: 160px; } .c9 { width: 113px; } .c10 { width: 80px; }
th, td { height: 40px; padding: 0 0 2px 10px; border-bottom: 1px solid #eaeaea; text-align: left; white-space: nowrap; }
th { height: 39px; padding: 2px 0 0 12px; background: #f8f8f8; color: #666; font-size: 13px; font-weight: 700; text-transform: uppercase; }
td { color: #333; }
td a { font-weight: 700; }
tbody tr:nth-child(even) { background: #f8f8f8; }
table input { display: block; width: 15px; height: 15px; margin: 0 0 2px 2px; }
th input { margin: 0 0 7px; }
.paginator { margin: 0; padding: 0 12px; border-top: 1px solid #eaeaea; border-bottom: 1px solid #eaeaea; line-height: 50px; }

/* Taskbar */
.taskbar { display: flex; flex: none; height: 61px; padding-top: 1px; background: linear-gradient(90deg, #21363f, #22383f 45%, #1f2e40 65%, #1a2540 90%); color: #fff; font-family: "Open Sans", sans-serif; }
.start { width: 72px; }
.start svg { width: 24px; height: 24px; }
.search { display: flex; align-items: center; width: 432px; padding: 0 18px 0 16px; background: #f1f1f1; border: 2px solid #c0c0c0; color: #111; }
.search svg { width: 25px; height: 25px; }
.search input { flex: 1; min-width: 0; margin-left: 18px; padding: 0; border: 0; background: none; font: 21px "Open Sans", sans-serif; }
.search input::placeholder { color: #333; }
.search .bing { width: 42px; height: 43px; }
.apps-row { display: flex; }
.apps-row button { position: relative; width: 75px; }
.apps-row svg { width: 36px; height: 36px; }
.apps-row .small { width: 24px; height: 24px; }
.apps-row .boxy { width: 30px; height: 30px; }
.running::after { content: ""; position: absolute; left: 7px; right: 7px; bottom: 0; height: 3px; background: #76b9ed; }
.focused { background: linear-gradient(#4d5f68, #4d5f68) center / 73px 100% no-repeat; }
.focused::after { left: 1px; right: 1px; }
.tray { display: flex; align-items: center; margin-left: auto; }
.weather { width: 34px; height: 32px; }
.temp { width: 65px; margin: 4px 0 0 12px; font-size: 18px; }
.tray-icons { display: flex; gap: 12px; }
.tray svg { fill: none; }
.tray-icons svg { width: 24px; height: 24px; stroke: #fff; stroke-width: 1px; }
.pen { width: 24px; height: 24px; margin-left: 18px; }
.two-line { display: flex; flex-direction: column; align-items: center; font-size: 17px; line-height: 27px; }
.lang { width: 80px; }
.clock { width: 78px; }
.notify { width: 84px; }
.notify svg { width: 26px; height: 26px; }
.peek { align-self: stretch; width: 8px; border-left: 1px solid #8b93a1; }

.wallpaper { flex: 1; min-height: 0; }
.wallpaper svg { width: 100%; height: 100%; }
.compact { height: 40px; padding-top: 0; }
.compact .apps-row button { width: 49px; }
.compact .apps-row svg { width: 24px; height: 24px; }
.compact .apps-row .small { width: 16px; height: 16px; }
.compact .apps-row .boxy { width: 20px; height: 20px; }
.compact .light svg { width: 22px; height: 22px; }
.compact .running::after { left: 4px; right: 4px; height: 2px; }
.compact .focused::after { left: 0; right: 0; }
.compact .pen { width: 17px; height: 17px; margin: 0 6px 0 0; }
.compact .two-line { font-size: 12px; line-height: 18px; width: 62px; margin-right: 4px; }
```
